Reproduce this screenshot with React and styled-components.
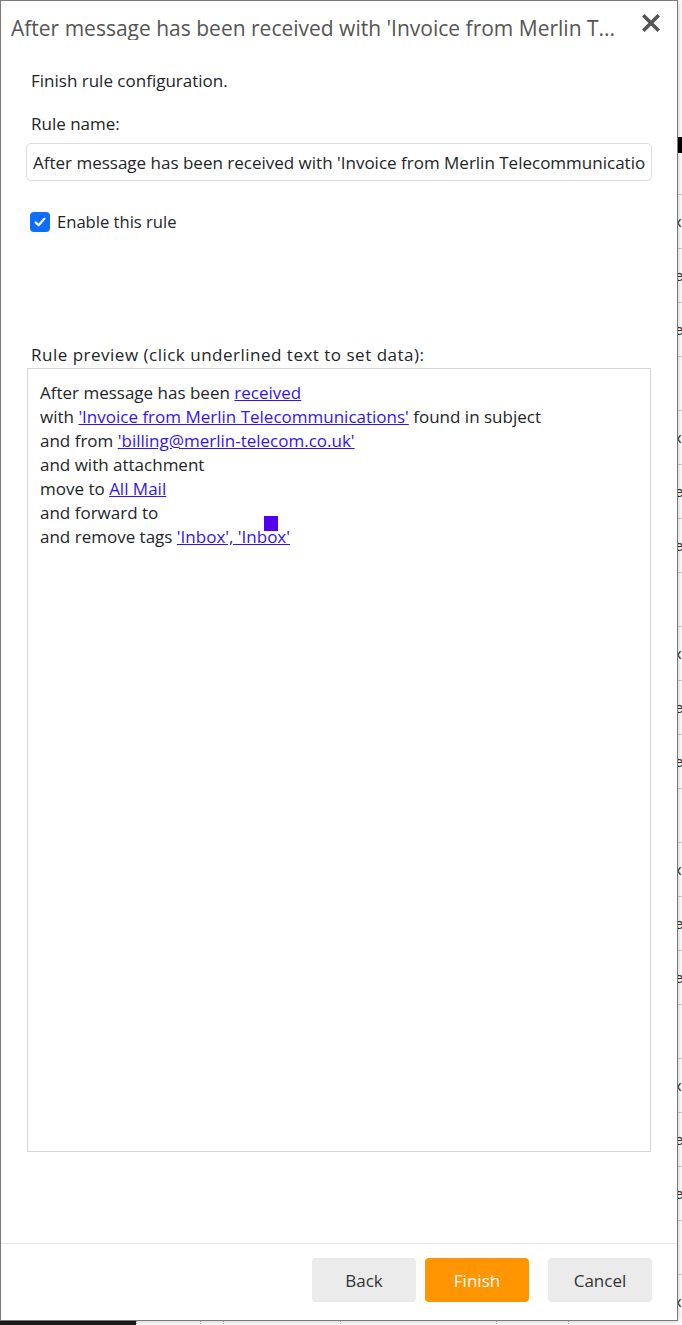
import React from 'react'
import styled, { createGlobalStyle } from 'styled-components'

const Global = createGlobalStyle`
  html, body {
    margin: 0;
    padding: 0;
  }
  body {
    font-family: "Open Sans", "Noto Sans", sans-serif;
    color: #212529;
  }
`

const Page = styled.div`
  position: relative;
  width: 682px;
  height: 1325px;
  overflow: hidden;
  background: #fff;
`

// the app behind the dialog, only slivers of it show
const Backdrop = styled.div`
  display: grid;
  grid-template-columns: 136px 1fr;
  height: 100%;
`

const Sidebar = styled.div`
  background: #1e1e1e;
`

const Main = styled.div`
  display: flex;
  flex-direction: column;
  padding-top: 115px;
`

const TopBar = styled.div`
  height: 80px;
  border-bottom: 1px solid #ccc;
  display: flex;
  justify-content: flex-end;
  padding-top: 22px;
  box-sizing: border-box;

  span {
    width: 20px;
    height: 16px;
    background: #000;
  }
`

const Row = styled.div`
  display: grid;
  grid-template-columns: 64px 23px 117px 156px 72px 1fr;
  height: 54px;
  box-sizing: border-box;
  border-bottom: 1px solid #d0d0d0;
  background: ${p => (p.$shade ? '#ececec' : '#fff')};
  font-family: "Liberation Sans", Arial, sans-serif;
  font-size: 15px;
  color: #333;
`

const Cell = styled.div`
  padding: ${p => (p.$shade ? 6 : 18)}px 0 0 ${p => p.$pad || 10}px;
  border-left: 1px dotted #bbb;
  white-space: nowrap;
`

const Dialog = styled.div`
  position: absolute;
  left: 0;
  top: 0;
  width: 678px;
  height: 1321px;
  box-sizing: border-box;
  border: 1px solid #7a7a7a;
  background: #fff;
  display: flex;
  flex-direction: column;
  box-shadow: 0 0 6px rgba(0, 0, 0, 0.25);
`

const Header = styled.div`
  display: flex;
  align-items: center;
  height: 54px;
  padding: 0 17px 0 10px;
  box-sizing: border-box;
`

const Title = styled.h2`
  flex: 1;
  min-width: 0;
  margin: 0;
  font-size: 21px;
  font-weight: 400;
  line-height: 24px;
  color: #555;
  white-space: nowrap;
  overflow: hidden;
  text-overflow: ellipsis;
  padding-right: 20px;
`

const Close = styled.button`
  border: 0;
  background: none;
  padding: 0;
  width: 18px;
  height: 18px;
  margin-top: -10px;
  cursor: pointer;
  display: flex;
`

const Body = styled.div`
  flex: 1;
  display: flex;
  flex-direction: column;
  padding: 0 25px;
`

const Text = styled.p`
  margin: ${p => p.$top}px 0 0;
  padding-left: 5px;
  font-size: 17px;
  line-height: 24px;
  letter-spacing: ${p => p.$spread || 0}px;
`

const Input = styled.input`
  margin-top: 7px;
  width: 626px;
  height: 38px;
  box-sizing: border-box;
  border: 1px solid #dcdcdc;
  border-radius: 5px;
  padding: 0 6px;
  font-family: "Open Sans", "Noto Sans", sans-serif;
  font-size: 17px;
  color: #212529;
  outline: none;
`

const CheckRow = styled.label`
  margin-top: 29px;
  display: flex;
  align-items: center;
  gap: 7px;
  padding-left: 4px;
  font-size: 16.6px;
  line-height: 24px;
`

const Box = styled.span`
  width: 20px;
  height: 20px;
  border-radius: 4px;
  background: #0d6efd;
  display: flex;
  align-items: center;
  justify-content: center;
`

const Preview = styled.div`
  position: relative;
  margin: 1px 0 0 1px;
  width: 624px;
  height: 784px;
  box-sizing: border-box;
  border: 1px solid #d6d6d6;
  padding: 12px 12px;
  font-size: 17px;
  line-height: 24px;
`

const Line = styled.div`
  white-space: nowrap;
`

const Link = styled.a`
  color: #3413f0;
  text-decoration: underline;
  cursor: pointer;
`

const Marker = styled.span`
  position: absolute;
  left: 236px;
  top: 147px;
  width: 14px;
  height: 15px;
  background: #5400f0;
`

const Footer = styled.div`
  display: flex;
  justify-content: flex-end;
  border-top: 1px solid #e6e6e6;
  padding: 14px 25px 18px;
`

const Button = styled.button`
  width: 104px;
  height: 44px;
  margin-left: ${p => p.$gap || 0}px;
  border: 0;
  border-radius: 4px;
  background: ${p => (p.$primary ? '#ff9500' : '#ebebeb')};
  color: ${p => (p.$primary ? '#fff' : '#333')};
  font-family: "Open Sans", "Noto Sans", sans-serif;
  font-size: 17px;
  cursor: pointer;
`

const rows = [
  ['12/09/2023', 'Invoice', '£120.00', 'Accounts Inbox'],
  ['11/09/2023', 'Receipt', '£45.50', 'Default Channel'],
  ['10/09/2023', 'Invoice', '£310.00', 'Default Channel'],
  ['08/09/2023', 'Expense', '£18.20', 'Suppliers'],
  ['07/09/2023', 'Invoice', '£99.99', 'Accounts Inbox'],
  ['05/09/2023', 'Receipt', '£12.00', 'Default Channel'],
  ['04/09/2023', 'Invoice', '£76.40', 'Default Channel'],
  ['02/09/2023', 'Expense', '£250.00', 'Suppliers'],
  ['01/09/2023', 'Invoice', '£64.00', 'Accounts Inbox'],
  ['30/08/2023', 'Receipt', '£9.99', 'Default Channel'],
  ['28/08/2023', 'Invoice', '£142.10', 'Default Channel'],
  ['27/08/2023', 'Expense', '£33.00', 'Suppliers'],
  ['25/08/2023', 'Invoice', '£58.75', 'Accounts Inbox'],
  ['23/08/2023', 'Receipt', '£21.30', 'Default Channel'],
  ['21/08/2023', 'Invoice', '£180.00', 'Default Channel'],
  ['19/08/2023', 'Expense', '£47.60', 'Suppliers'],
  ['17/08/2023', 'Invoice', '£88.00', 'Accounts Inbox'],
  ['15/08/2023', 'Receipt', '£14.20', 'Default Channel'],
  ['12/08/2023', 'Invoice', '£205.00', 'Default Channel'],
  ['09/08/2023', 'Expense', '£66.10', 'Suppliers'],
  ['05/08/2023', 'Invoice', '£120.00', 'Accounts Inbox'],
]

export default function App() {
  const name = "After message has been received with 'Invoice from Merlin Telecommunications' found in subject"
  return (
    <Page>
      <Global />
      <Backdrop>
        <Sidebar />
        <Main>
          <TopBar>
            <span />
          </TopBar>
          {rows.map((r, i) => (
            <Row key={i}>
              <Cell />
              <Cell />
              <Cell $pad={20}>{r[0]}</Cell>
              <Cell>{r[1]}</Cell>
              <Cell>{r[2]}</Cell>
              <Cell>{r[3]}</Cell>
            </Row>
          ))}
          <Row $shade>
            <Cell $shade />
            <Cell $shade />
            <Cell $shade $pad={20}>01/08/2023</Cell>
            <Cell $shade>Expense</Cell>
            <Cell $shade />
            <Cell $shade>Default Channel</Cell>
          </Row>
        </Main>
      </Backdrop>

      <Dialog>
        <Header>
          <Title title={name}>After message has been received with 'Invoice from Merlin T...</Title>
          <Close aria-label="Close">
            <svg width="18" height="18" viewBox="0 0 18 18">
              <path d="M2.5 2.5 L15.5 15.5 M15.5 2.5 L2.5 15.5" stroke="#555" strokeWidth="3.6" strokeLinecap="square" />
            </svg>
          </Close>
        </Header>

        <Body>
          <Text $top={14}>Finish rule configuration.</Text>
          <Text $top={19}>Rule name:</Text>
          <Input defaultValue={name} />
          <CheckRow>
            <Box>
              <svg width="14" height="14" viewBox="0 0 14 14">
                <path d="M2.6 7.4 L5.6 10.3 L11.4 3.8" fill="none" stroke="#fff" strokeWidth="2.2" strokeLinecap="round" strokeLinejoin="round" />
              </svg>
            </Box>
            Enable this rule
          </CheckRow>
          <Text $top={109} $spread={0.5}>Rule preview (click underlined text to set data):</Text>
          <Preview>
            <Line>After message has been <Link>received</Link></Line>
            <Line>with <Link>'Invoice from Merlin Telecommunications'</Link> found in subject</Line>
            <Line>and from <Link>'billing@merlin-telecom.co.uk'</Link></Line>
            <Line>and with attachment</Line>
            <Line>move to <Link>All Mail</Link></Line>
            <Line>and forward to</Line>
            <Line>and remove tags <Link>'Inbox', 'Inbox'</Link></Line>
            <Marker />
          </Preview>
        </Body>

        <Footer>
          <Button>Back</Button>
          <Button $primary $gap={9}>Finish</Button>
          <Button $gap={19}>Cancel</Button>
        </Footer>
      </Dialog>
    </Page>
  )
}
